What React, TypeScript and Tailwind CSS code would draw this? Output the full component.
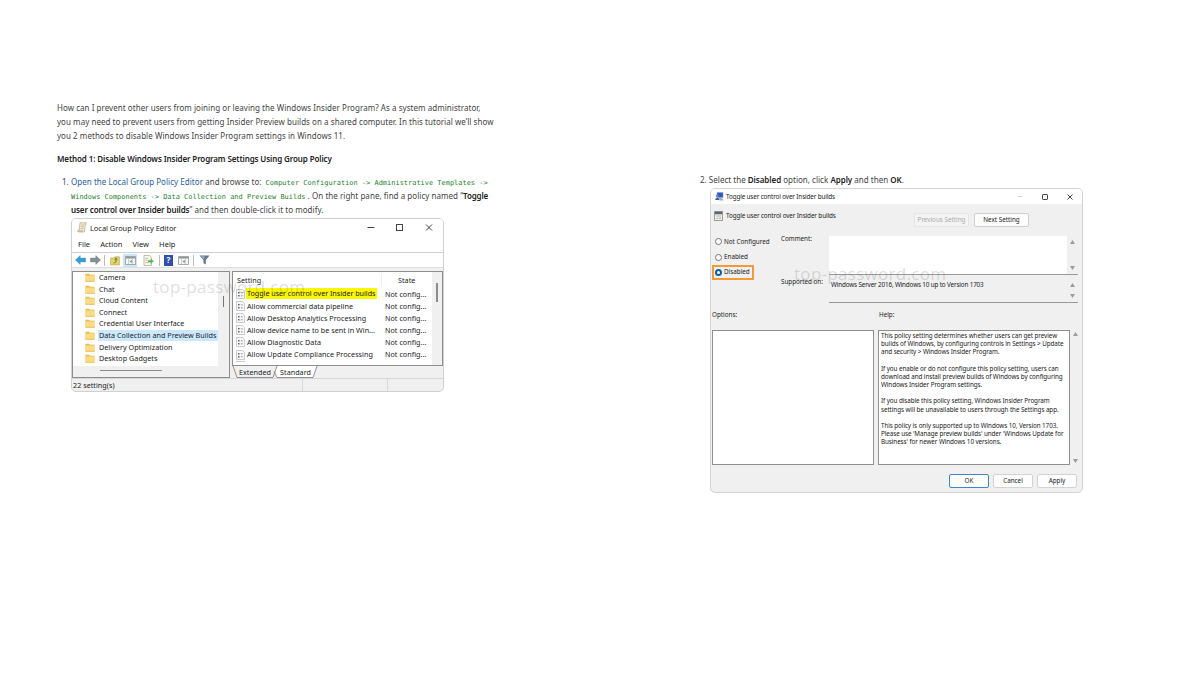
import type { ReactNode } from "react";

const folders = [
  "Camera",
  "Chat",
  "Cloud Content",
  "Connect",
  "Credential User Interface",
  "Data Collection and Preview Builds",
  "Delivery Optimization",
  "Desktop Gadgets",
];

const settings = [
  "Toggle user control over Insider builds",
  "Allow commercial data pipeline",
  "Allow Desktop Analytics Processing",
  "Allow device name to be sent in Win...",
  "Allow Diagnostic Data",
  "Allow Update Compliance Processing",
];

const helpText = [
  [
    "This policy setting determines whether users can get preview",
    "builds of Windows, by configuring controls in Settings > Update",
    "and security > Windows Insider Program.",
  ],
  [
    "If you enable or do not configure this policy setting, users can",
    "download and install preview builds of Windows by configuring",
    "Windows Insider Program settings.",
  ],
  [
    "If you disable this policy setting, Windows Insider Program",
    "settings will be unavailable to users through the Settings app.",
  ],
  [
    "This policy is only supported up to Windows 10, Version 1703.",
    "Please use 'Manage preview builds' under 'Windows Update for",
    "Business' for newer Windows 10 versions.",
  ],
];

function FolderIcon() {
  return (
    <svg className="h-[9px] w-[10px] shrink-0" viewBox="0 0 10 9">
      <path d="M.5.7h3.6l.9 1h4.5v6.8h-9z" fill="#e9b949" />
      <path d="M.8 2.6h8.4v5.6H.8z" fill="#fbdc83" />
      <path d="M.5 8.3h9" stroke="#dca93a" strokeWidth=".5" />
    </svg>
  );
}

function SettingIcon() {
  return (
    <svg className="h-[10px] w-[9px] shrink-0" viewBox="0 0 9 10">
      <path d="M.5.5h6l2 2v7h-8z" fill="#fafafa" stroke="#b5b5b5" strokeWidth=".7" />
      <path d="M2 3h1.6v1.5H2zM2 6h1.6v1.5H2z" fill="#5d6b7c" />
      <path d="M4.8 3.8h2M4.8 6.8h2" stroke="#8492a3" strokeWidth=".9" />
    </svg>
  );
}

function ScrollIcon() {
  return (
    <svg className="h-[11px] w-[10px] shrink-0" viewBox="0 0 10 11">
      <path d="M3 .8h6.2c-.9.6-.9 1.5-.9 2.4L7.4 10H1.2c-.8-.4-.7-1.6 0-2h1z" fill="#f2ecd2" stroke="#a19a80" strokeWidth=".6" />
      <path d="M4 3h3M3.8 4.8h3M3.5 6.6h3" stroke="#a9a48f" strokeWidth=".6" />
      <path d="M8 1h1.3v2H8zM1 8.3h5V10H1z" fill="#cdbf85" />
    </svg>
  );
}

function PolicyIcon() {
  return (
    <svg className="h-[9px] w-[9px] shrink-0" viewBox="0 0 9 9">
      <path d="M2 .5h6v5H2z" fill="#2f55c8" stroke="#8e9bb8" strokeWidth=".5" />
      <path d="M3 6h4l1.5 2.5h-4z" fill="#a7aebb" />
      <circle cx="2.2" cy="4" r="1.4" fill="#7386b5" />
      <path d="M.3 8c0-3 3.8-3 3.8 0z" fill="#41598f" />
    </svg>
  );
}

function PolicyWindowIcon() {
  return (
    <svg className="h-[10px] w-[9px] shrink-0" viewBox="0 0 9 10">
      <path d="M.5.5h8v9h-8z" fill="#eef0ec" stroke="#74777c" strokeWidth=".7" />
      <path d="M.8.8h7.4v2.4H.8z" fill="#5f6670" />
      <path d="M2 5h5M2 7.3h2" stroke="#9ea29d" strokeWidth=".7" />
      <path d="M5 6.5h2v1.6H5z" fill="#c5b878" />
    </svg>
  );
}

function BackIcon({ className }: { className: string }) {
  return (
    <svg className={className} viewBox="0 0 11 10">
      <path d="M.4 5 5.2.5v2.6h5.4v3.8H5.2v2.6z" fill="currentColor" stroke="#6c7f8c" strokeWidth=".4" />
    </svg>
  );
}

function PaneIcon() {
  return (
    <svg className="h-[9px] w-[11px]" viewBox="0 0 11 9">
      <path d="M.5.5h10v8H.5z" fill="#f7f7f5" stroke="#84898c" strokeWidth=".7" />
      <path d="M.8.8h9.4v1.8H.8z" fill="#8e979c" />
      <path d="M3.7 2.6v6M7.4 2.6v6" stroke="#a6abad" strokeWidth=".6" />
      <path d="m6.7 3.9-2 1.6 2 1.6z" fill="#399c4e" />
    </svg>
  );
}

function UpIcon() {
  return (
    <svg className="h-[11px] w-[10px]" viewBox="0 0 10 11">
      <path d="M.6 3h3l1-1.2h4.8V10H.6z" fill="#efce70" stroke="#c19e43" strokeWidth=".6" />
      <path d="M2.5 8c2.5 0 3-1.5 3-3.2H4L6 2.2l2 2.6H6.8C6.8 8 5 8.8 2.5 8z" fill="#4aa53d" />
    </svg>
  );
}

function ExportIcon() {
  return (
    <svg className="h-[11px] w-[11px]" viewBox="0 0 11 11">
      <path d="M1 .5h5.5L8.5 2.5v8H1z" fill="#faf8e8" stroke="#aaa68d" strokeWidth=".7" />
      <path d="M2.3 3.3h3M2.3 5.3h2M2.3 7.5h3" stroke="#99a" strokeWidth=".6" />
      <path d="M5 5.2h2.7V3.5l3 2.7-3 2.7V7.2H5z" fill="#55b653" />
    </svg>
  );
}

function FilterIcon() {
  return (
    <svg className="h-[10px] w-[11px]" viewBox="0 0 11 10">
      <path d="M.5.5h10L6.8 5v4.5L4.4 8V5z" fill="#61798c" />
      <path d="M1.8 1.2h4L5 4.6z" fill="#96aebf" />
    </svg>
  );
}

function WindowButtons({ faded = false }: { faded?: boolean }) {
  return (
    <svg
      className={faded ? "h-[8px] w-[57px]" : "h-[9px] w-[68px]"}
      viewBox={faded ? "0 0 57 8" : "0 0 68 9"}
      fill="none"
      stroke="#444"
      strokeWidth="1"
    >
      {faded ? (
        <>
          <path d="M.5 3.5h5" stroke="#d5d5d5" />
          <rect x="25.5" y="1.5" width="5" height="5" rx=".6" />
          <path d="m50.5 1.5 5 5m0-5-5 5" />
        </>
      ) : (
        <>
          <path d="M.5 4.5h7" />
          <rect x="29.5" y="1.5" width="6" height="6" />
          <path d="m59 1.5 6 6m0-6-6 6" />
        </>
      )}
    </svg>
  );
}

function Arrows({ className }: { className: string }) {
  return (
    <div className={`flex w-[11px] shrink-0 flex-col items-center justify-between ${className}`}>
      <svg className="h-[4px] w-[5px]" viewBox="0 0 5 4">
        <path d="M0 4h5L2.5 0z" fill="#9b9b9b" />
      </svg>
      <svg className="h-[4px] w-[5px]" viewBox="0 0 5 4">
        <path d="M0 0h5L2.5 4z" fill="#9b9b9b" />
      </svg>
    </div>
  );
}

function Watermark({ className }: { className: string }) {
  return (
    <div
      className={`pointer-events-none absolute font-['Open_Sans',sans-serif] text-[17px] leading-[20px] tracking-[0.3px] text-[#777]/25 ${className}`}
    >
      top-password.com
    </div>
  );
}

function Radio({ label, checked = false }: { label: string; checked?: boolean }) {
  return (
    <div className="flex h-[15.5px] items-center gap-[2px] pl-[3px]">
      <span
        className={
          checked
            ? "size-[7px] rounded-full border-2 border-[#0b60ad] bg-white"
            : "size-[7px] rounded-full border border-[#777] bg-white"
        }
      />
      <span>{label}</span>
    </div>
  );
}

function DialogButton({ children, className }: { children: ReactNode; className: string }) {
  return (
    <button className={`flex h-[14px] items-center justify-center rounded-[2px] border ${className}`}>
      {children}
    </button>
  );
}

function PolicyEditor() {
  return (
    <div className="relative h-[174px] w-[373px] overflow-hidden rounded-[5px] border border-[#d0d0d0] bg-[#f0f0f0] font-['Noto_Sans',sans-serif] text-[7.2px] tracking-[0.03px] text-[#1c1c1c]">
      <div className="flex h-[18px] items-center bg-white pr-[8px] pl-[5px]">
        <ScrollIcon />
        <span className="ml-[3px] flex-1 text-[7.4px] tracking-normal">Local Group Policy Editor</span>
        <WindowButtons />
      </div>
      <div className="flex h-[16px] items-center gap-[10px] border-b border-[#cfcfcf] bg-white pl-[6px] text-[7.5px]">
        <span>File</span>
        <span>Action</span>
        <span>View</span>
        <span>Help</span>
      </div>
      <div className="flex h-[15px] items-center border-b border-[#ddd] bg-white pt-[1px] pl-[3px]">
        <BackIcon className="h-[10px] w-[11px] text-[#2da2e0]" />
        <BackIcon className="ml-[4px] h-[10px] w-[11px] rotate-180 text-[#8a8f93]" />
        <span className="mr-[5px] ml-[3px] h-[11px] w-px bg-[#bbb]" />
        <UpIcon />
        <span className="ml-[3px] flex h-[13px] w-[14px] items-center justify-center bg-[#cbe6f8]">
          <PaneIcon />
        </span>
        <span className="ml-[6px]"><ExportIcon /></span>
        <span className="mr-[4px] ml-[5px] h-[11px] w-px bg-[#bbb]" />
        <span className="flex h-[11px] w-[9px] items-center justify-center bg-[#2f4fb0] text-[8px] font-bold text-white">?</span>
        <span className="ml-[5px]"><PaneIcon /></span>
        <span className="mr-[5px] ml-[4px] h-[11px] w-px bg-[#bbb]" />
        <FilterIcon />
      </div>
      <div className="mt-[3px] flex h-[107px]">
        <div className="w-[158px] border border-[#8d8d8d] bg-[#f0f0f0]">
          <div className="flex h-[94px]">
            <div className="w-[145px] bg-white">
              {folders.map((name) => (
                <div key={name} className="flex h-[11.6px] items-center pl-[12px]">
                  <FolderIcon />
                  <span
                    className={
                      name === "Data Collection and Preview Builds"
                        ? "ml-[3px] h-[11.6px] w-[120px] bg-[#cce8ff] pl-px leading-[11px] whitespace-nowrap"
                        : "ml-[3px] pl-px leading-[11px] whitespace-nowrap"
                    }
                  >
                    {name}
                  </span>
                </div>
              ))}
            </div>
            <div className="mt-[24px] ml-[5px] h-[11px] w-px bg-[#777]" />
          </div>
          <div className="mt-[4px] ml-[27px] h-[1.5px] w-[62px] bg-[#8c8c8c]" />
        </div>
        <div className="ml-[2px] flex flex-1 flex-col">
          <div className="flex h-[95px] overflow-hidden border border-[#8d8d8d] bg-white">
            <div className="w-[199px]">
              <div className="flex h-[16px] items-center pl-[4px]">
                <span className="w-[144px]">Setting</span>
                <span className="border-l border-[#eee] pl-[16px]">State</span>
              </div>
              {settings.map((name, i) => (
                <div key={name} className="flex h-[12.15px] items-center pl-[3px]">
                  <SettingIcon />
                  <span className="flex w-[140px] pl-px whitespace-nowrap">
                    <span className={i === 0 ? "h-[11px] bg-[#fbf700] pr-[2px] pl-px leading-[11px] tracking-[-0.03px]" : "pl-px leading-[11px]"}>
                      {name}
                    </span>
                  </span>
                  <span>Not config...</span>
                </div>
              ))}
              <div className="ml-[3px] h-[4px] w-[9px] border-t border-[#ccc]" />
            </div>
            <div className="flex-1 bg-[#f0f0f0] pt-[11px]">
              <div className="ml-[4px] h-[19px] w-[1.5px] bg-[#8c8c8c]" />
            </div>
          </div>
          <div className="flex h-[12px] items-center">
            <svg className="absolute h-[12px] w-[90px]" viewBox="0 0 90 12" fill="none" stroke="#777" strokeWidth=".8">
              <path d="m42 5 3-5h40l-4 11.5H45z" fill="#fff" stroke="none" />
              <path d="m1 0 4 11.5h36L45 0M42 5l3 6.5h36L85 0" />
            </svg>
            <span className="relative ml-[7px]">Extended</span>
            <span className="relative ml-[9px]">Standard</span>
          </div>
        </div>
      </div>
      <div className="flex h-[14px] border-t border-[#d7d7d7] leading-[13px]">
        <span className="w-[231px] border-r border-[#d7d7d7] pl-px">22 setting(s)</span>
        <span className="w-[85px] border-r border-[#d7d7d7]" />
      </div>
      <Watermark className="top-[58px] left-[81px]" />
    </div>
  );
}

function ToggleDialog() {
  return (
    <div className="relative h-[305px] w-[373px] overflow-hidden rounded-[5px] border border-[#d4d4d4] bg-[#f0f0f0] font-['Noto_Sans',sans-serif] text-[6.3px] text-[#222]">
      <div className="flex h-[15px] items-center bg-white pr-[8px] pl-[4px]">
        <PolicyIcon />
        <span className="ml-[2px] flex-1 tracking-[-0.12px]">Toggle user control over Insider builds</span>
        <WindowButtons faded />
      </div>
      <div className="flex h-[30px] pl-[3px]">
        <div className="flex h-[24px] w-[200px] items-center">
          <PolicyWindowIcon />
          <span className="ml-[3px] tracking-[-0.1px]">Toggle user control over Insider builds</span>
        </div>
        <div className="flex gap-[5px] pt-[8.5px]">
          <DialogButton className="w-[55px] border-[#e6e6e6] bg-[#f4f4f4] text-[#aaa]">Previous Setting</DialogButton>
          <DialogButton className="w-[55px] border-[#cfcfcf] bg-[#fdfdfd]">Next Setting</DialogButton>
        </div>
      </div>
      <div className="flex h-[68px]">
        <div className="w-[70px] pl-[1px]">
          <Radio label="Not Configured" />
          <Radio label="Enabled" />
          <div className="-mt-[0.5px] w-[42px] border-2 border-[#f39a35] [&>div]:h-[11.5px] [&>div]:pl-[1px]">
            <Radio label="Disabled" checked />
          </div>
        </div>
        <div className="flex w-[48px] flex-col justify-between pb-[15px] leading-[10px]">
          <span>Comment:</span>
          <span className="tracking-[-0.03px]">Supported on:</span>
        </div>
        <div className="w-[249px] pt-[1.5px]">
          <div className="flex h-[39px] border-b border-[#999] bg-white">
            <div className="flex-1" />
            <Arrows className="bg-[#f0f0f0] py-[4px]" />
          </div>
          <div className="mt-[4px] flex h-[24px] border-b border-[#999]">
            <span className="flex-1 pl-[2px] leading-[11px] tracking-[-0.14px]">Windows Server 2016, Windows 10 up to Version 1703</span>
            <Arrows className="py-[4px]" />
          </div>
        </div>
      </div>
      <div className="flex h-[28px] items-center pb-[3px] pl-[1px]">
        <span className="w-[167px]">Options:</span>
        <span>Help:</span>
      </div>
      <div className="flex h-[135px] pl-px">
        <div className="w-[162px] border border-[#8f8f8f] bg-white" />
        <div className="ml-[4px] flex w-[192px] flex-col gap-[8.2px] border border-[#8f8f8f] bg-white pt-[0.5px] pl-[2px] leading-[8.2px] tracking-[-0.075px] whitespace-nowrap">
          {helpText.map((lines) => (
            <p key={lines[0]}>
              {lines.map((line) => (
                <span key={line} className="block">{line}</span>
              ))}
            </p>
          ))}
        </div>
        <Arrows className="py-[2px]" />
      </div>
      <div className="flex justify-end gap-[4px] pt-[9px] pr-[5px]">
        <DialogButton className="w-[40px] border-[#3e86cf] bg-[#fdfdfd]">OK</DialogButton>
        <DialogButton className="w-[40px] border-[#d4d4d4] bg-[#fdfdfd]">Cancel</DialogButton>
        <DialogButton className="w-[40px] border-[#d4d4d4] bg-[#fdfdfd]">Apply</DialogButton>
      </div>
      <Watermark className="top-[75px] left-[83px]" />
    </div>
  );
}

export default function App() {
  return (
    <div className="flex h-[679px] w-[1200px] overflow-hidden bg-white pl-[57px] font-['Noto_Sans',sans-serif] text-[8px] leading-[14.2px] text-[#444]">
      <article className="w-[643px] pt-[101px] whitespace-nowrap">
        <p className="tracking-[0.045px]">
          How can I prevent other users from joining or leaving the Windows Insider Program? As a system administrator,
          <br />
          you may need to prevent users from getting Insider Preview builds on a shared computer. In this tutorial we’ll show
          <br />
          you 2 methods to disable Windows Insider Program settings in Windows 11.
        </p>
        <h2 className="mt-[8px] font-semibold tracking-[-0.11px] text-[#222]">
          Method 1: Disable Windows Insider Program Settings Using Group Policy
        </h2>
        <div className="mt-[9px] flex">
          <span className="w-[14px] pl-[5px]">1.</span>
          <div>
            <p className="h-[43px] tracking-[0.04px]">
              <a className="text-[#2a5c9f]">Open the Local Group Policy Editor</a> and browse to:{" "}
              <code className="pl-[2px] font-['DejaVu_Sans_Mono',monospace] text-[6.9px] leading-none text-[#23802b]">
                Computer Configuration -&gt; Administrative Templates -&gt;
              </code>
              <br />
              <code className="font-['DejaVu_Sans_Mono',monospace] text-[6.9px] leading-none text-[#23802b]">
                Windows Components -&gt; Data Collection and Preview Builds
              </code>
              {" "}. On the right pane, find a policy named “<b className="font-semibold tracking-[-0.14px] text-[#222]">Toggle</b>
              <br />
              <b className="font-semibold tracking-[-0.1px] text-[#222]">user control over Insider builds</b>” and then double-click it to modify.
            </p>
            <PolicyEditor />
          </div>
        </div>
      </article>
      <article className="pt-[173px] whitespace-nowrap">
        <p className="tracking-[0.02px]">
          2. Select the <b className="font-semibold tracking-[-0.05px] text-[#222]">Disabled</b> option, click{" "}
          <b className="font-semibold tracking-[-0.05px] text-[#222]">Apply</b> and then{" "}
          <b className="font-semibold tracking-[-0.05px] text-[#222]">OK</b>.
        </p>
        <div className="mt-px ml-[10px]">
          <ToggleDialog />
        </div>
      </article>
    </div>
  );
}
